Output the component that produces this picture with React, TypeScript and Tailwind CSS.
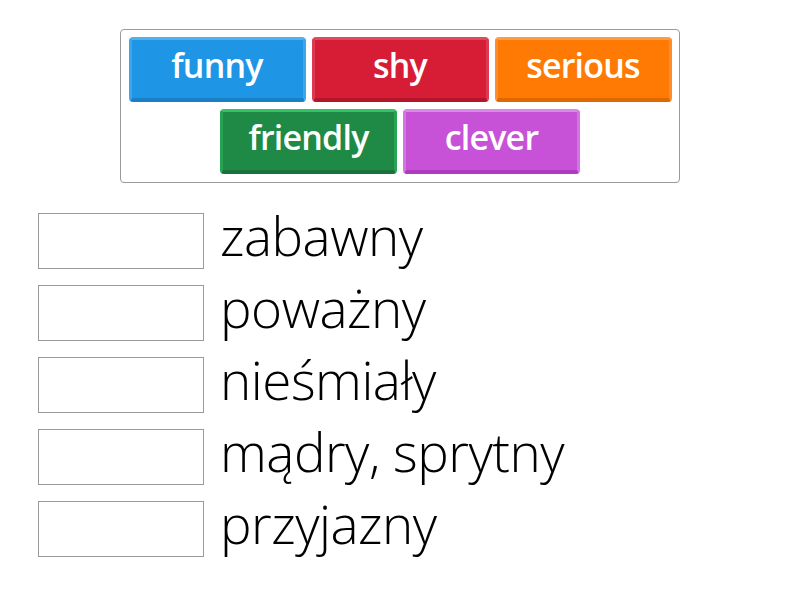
import React from "react";

const tiles = [
  { label: "funny", cls: "bg-[#1f95e6] border-t-[#4fb2ef] border-x-[#3ca6ec] border-b-[#1a7fc6]" },
  { label: "shy", cls: "bg-[#d61d35] border-t-[#e04a5e] border-x-[#dc3a50] border-b-[#b3162b]" },
  { label: "serious", cls: "bg-[#ff7a05] border-t-[#ff9b45] border-x-[#ff8d2c] border-b-[#e06800]" },
  { label: "friendly", cls: "bg-[#1f8a45] border-t-[#33c466] border-x-[#27a453] border-b-[#18723a]" },
  { label: "clever", cls: "bg-[#c752d8] border-t-[#d98ae4] border-x-[#d276df] border-b-[#b03ac2]" },
];

const rows = ["zabawny", "poważny", "nieśmiały", "mądry, sprytny", "przyjazny"];

function Tile({ label, cls }: { label: string; cls: string }) {
  return (
    <div
      className={`flex h-[65px] w-[177px] items-center justify-center rounded-[4px] border-x-[3px] border-t-[3px] border-b-[4px] pb-[9px] text-[34px] leading-none font-semibold tracking-[-0.8px] text-white ${cls}`}
    >
      {label}
    </div>
  );
}

export default function App() {
  return (
    <div className="min-h-screen bg-white font-['Open_Sans',sans-serif]">
      <div className="mx-auto pt-[29px] w-[560px]">
        <div className="flex flex-col items-center gap-[7px] rounded-[4px] border border-[#9a9a9a] px-[8px] pt-[7px] pb-[8px]">
          <div className="flex gap-[6px]">
            {tiles.slice(0, 3).map((t) => (
              <Tile key={t.label} {...t} />
            ))}
          </div>
          <div className="flex gap-[6px]">
            {tiles.slice(3).map((t) => (
              <Tile key={t.label} {...t} />
            ))}
          </div>
        </div>
      </div>

      <div className="mt-[30px] ml-[38px] flex flex-col gap-[16px]">
        {rows.map((r) => (
          <div key={r} className="flex h-[56px] items-center">
            <div className="h-[56px] w-[166px] shrink-0 border border-[#9a9a9a] bg-white" />
            <span className="ml-[16px] mb-[12px] whitespace-nowrap text-[53px] leading-none font-light tracking-[-0.5px] text-black">
              {r}
            </span>
          </div>
        ))}
      </div>
    </div>
  );
}
